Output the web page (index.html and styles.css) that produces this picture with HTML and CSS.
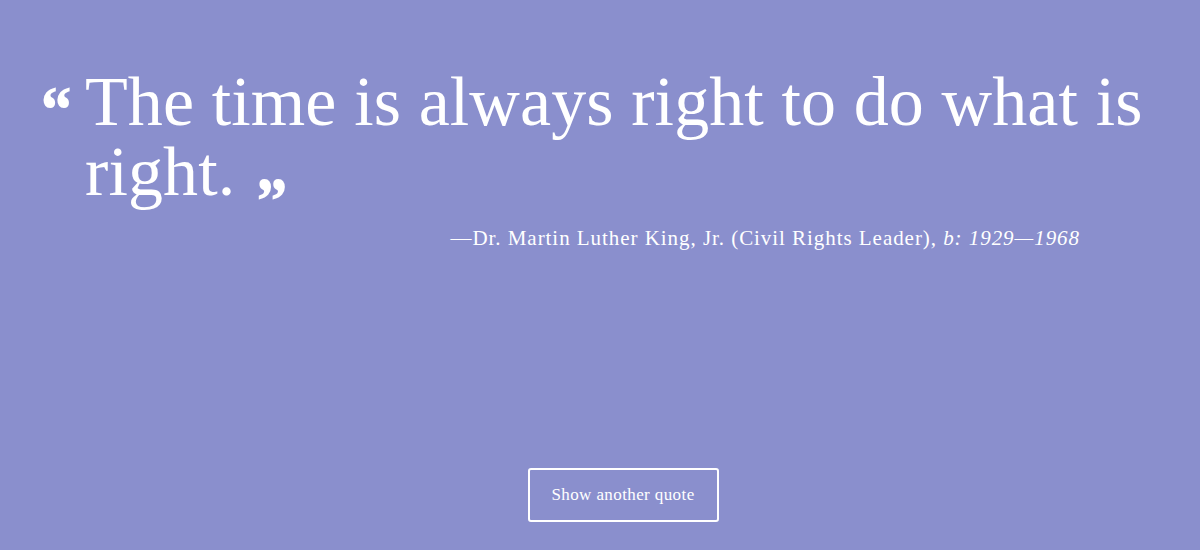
FILE: index.html
```html
<!DOCTYPE html>
<html>
<head>
<meta charset="utf-8">
<link rel="stylesheet" href="styles.css">
</head>
<body>
<main class="page">
  <section class="quote-box">
    <blockquote class="quote">
      <span class="mark open">&ldquo;</span>
      <p class="quote-text">The time is always right to do what is right.<span class="mark close">&rdquo;</span></p>
    </blockquote>
    <p class="author">&mdash;Dr. Martin Luther King, Jr. (Civil Rights Leader), <em>b: 1929&mdash;1968</em></p>
  </section>
  <div class="actions">
    <button class="new-quote">Show another quote</button>
  </div>
</main>
</body>
</html>
```
FILE: styles.css
```css
html, body {
  margin: 0;
  padding: 0;
  height: 100%;
}
body {
  background: #8a8fcd;
  color: #ffffff;
  font-family: "Liberation Serif", "DejaVu Serif", serif;
}
.page {
  height: 550px;
  display: flex;
  flex-direction: column;
}
.quote-box {
  padding: 67px 40px 0 40px;
}
.quote {
  margin: 0;
  display: flex;
  align-items: flex-start;
}
.mark {
  font-family: "Noto Serif", "DejaVu Serif", serif;
  font-weight: 900;
  font-size: 64px;
  line-height: 1;
}
.mark.open {
  width: 45px;
  flex: none;
  margin-top: 10px;
}
.mark.close {
  margin-left: 20px;
  line-height: 0;
  vertical-align: -29px;
}
.quote-text {
  margin: 0;
  font-size: 70px;
  line-height: 70px;
  letter-spacing: 0.1px;
}
.author {
  margin: 17px 80px 0 0;
  text-align: right;
  font-size: 21px;
  line-height: 28px;
  letter-spacing: 0.95px;
}
.author em {
  font-style: italic;
}
.actions {
  margin-top: auto;
  padding: 0 0 28px 46px;
  display: flex;
  justify-content: center;
}
.new-quote {
  background: transparent;
  color: #ffffff;
  border: 2px solid #ffffff;
  border-radius: 3px;
  width: 191px;
  height: 54px;
  font-family: "Liberation Serif", serif;
  font-size: 17px;
  letter-spacing: 0.4px;
  cursor: pointer;
}
```
